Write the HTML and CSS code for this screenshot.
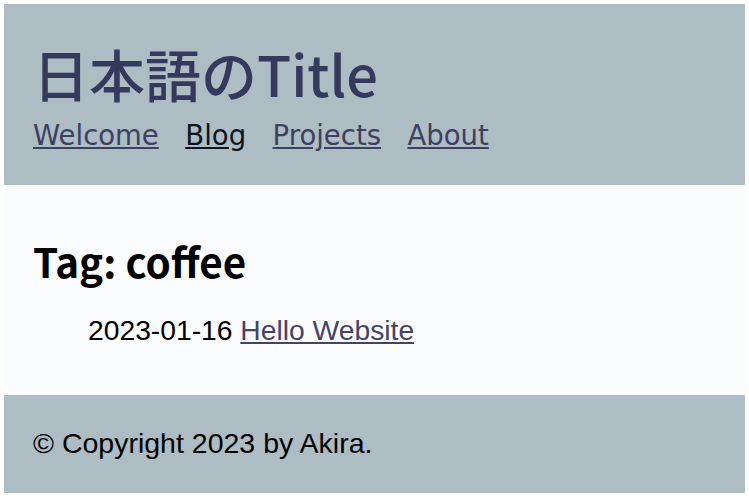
FILE: index.html
```html
<!DOCTYPE html>
<html lang="ja">
<head>
<meta charset="utf-8">
<title>Tag: coffee</title>
<link rel="stylesheet" href="styles.css">
</head>
<body>
<header class="site-header">
  <h1 class="site-title">日本語のTitle</h1>
  <nav class="site-nav">
    <a href="#">Welcome</a>
    <a href="#" class="current">Blog</a>
    <a href="#">Projects</a>
    <a href="#">About</a>
  </nav>
</header>
<main class="content">
  <h2 class="tag-title">Tag: coffee</h2>
  <ul class="post-list">
    <li>2023-01-16 <a href="#">Hello Website</a></li>
  </ul>
</main>
<footer class="site-footer">
  <p>© Copyright 2023 by Akira.</p>
</footer>
</body>
</html>
```

FILE: styles.css
```css
html {
  background: #ffffff;
}
body {
  margin: 4px;
  font-family: "Liberation Sans", Arial, sans-serif;
}
.site-header {
  background: #aebcc4;
  padding: 35px 29px 32px;
}
.site-title {
  margin: 0 0 10px;
  font-family: "Noto Sans CJK JP", "Noto Sans", sans-serif;
  font-weight: 500;
  font-size: 56px;
  line-height: 68px;
  color: #353a5c;
}
.site-nav {
  display: flex;
  gap: 26.5px;
  font-family: "DejaVu Sans", Verdana, sans-serif;
  font-size: 27.5px;
  line-height: 36px;
}
.site-nav a {
  color: #3d405f;
}
.site-nav a.current {
  color: #0b1520;
}
.content {
  background: #fbfcfe;
  padding: 52px 29px 47px;
}
.tag-title {
  margin: 0 0 27px;
  font-family: "Noto Sans CJK JP", "Noto Sans", sans-serif;
  font-weight: 700;
  font-size: 40.4px;
  line-height: 48px;
  color: #000;
}
.post-list {
  margin: 0;
  padding-left: 55px;
  list-style: none;
  font-size: 28.25px;
  line-height: 36px;
  color: #000;
}
.post-list a {
  color: #45436a;
}
.site-footer {
  background: #aebcc4;
  padding: 30px 29px 32px;
}
.site-footer p {
  margin: 0;
  font-size: 28.5px;
  line-height: 36px;
  color: #000;
}
```
